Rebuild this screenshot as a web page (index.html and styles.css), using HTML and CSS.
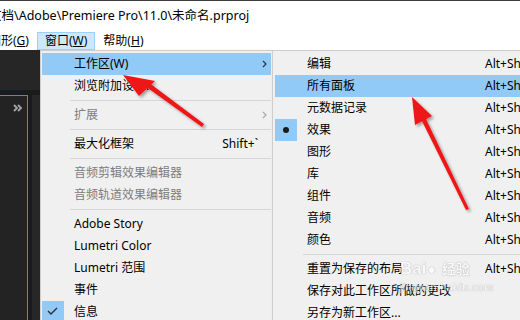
FILE: index.html
```html
<!DOCTYPE html>
<html>
	<head>
		<meta charset="utf-8">
		<title>Premiere Pro - 窗口菜单</title>
		<link rel="stylesheet" href="styles.css">
	</head>
	<body>
		<div class="titlebar">
			<span class="title">文档\Adobe\Premiere Pro\11.0\未命名.prproj</span>
		</div>
		<div class="menubar">
			<span class="mb-item">图形(<u>G</u>)</span>
			<span class="mb-item open">窗口(<u>W</u>)</span>
			<span class="mb-item">帮助(<u>H</u>)</span>
		</div>
		<div class="workspace">
			<div class="dock-top"></div>
			<div class="dock-row">
				<div class="panel active">
					<svg class="more" width="10" height="8" viewBox="0 0 10 8"><polyline points="1,1 4,4 1,7"/><polyline points="5,1 8,4 5,7"/></svg>
				</div>
				<div class="panel"></div>
			</div>
		</div>

		<!-- 窗口 menu -->
		<div class="menu menu-main">
			<div class="item hover"><span class="mark"></span><span class="label">工作区(W)</span><span class="key"></span><svg class="chev" width="5" height="8" viewBox="0 0 5 8"><polyline points="1,1 4,4 1,7"/></svg></div>
			<div class="item"><span class="mark"></span><span class="label">浏览附加设备...</span><span class="key"></span><span></span></div>
			<div class="sep"></div>
			<div class="item disabled"><span class="mark"></span><span class="label">扩展</span><span class="key"></span><svg class="chev" width="5" height="8" viewBox="0 0 5 8"><polyline points="1,1 4,4 1,7"/></svg></div>
			<div class="sep"></div>
			<div class="item"><span class="mark"></span><span class="label">最大化框架</span><span class="key">Shift+`</span><span></span></div>
			<div class="sep"></div>
			<div class="item disabled"><span class="mark"></span><span class="label">音频剪辑效果编辑器</span><span class="key"></span><span></span></div>
			<div class="item disabled"><span class="mark"></span><span class="label">音频轨道效果编辑器</span><span class="key"></span><span></span></div>
			<div class="sep"></div>
			<div class="item"><span class="mark"></span><span class="label">Adobe Story</span><span class="key"></span><span></span></div>
			<div class="item"><span class="mark"></span><span class="label">Lumetri Color</span><span class="key"></span><span></span></div>
			<div class="item"><span class="mark"></span><span class="label">Lumetri 范围</span><span class="key"></span><span></span></div>
			<div class="item"><span class="mark"></span><span class="label">事件</span><span class="key"></span><span></span></div>
			<div class="item"><span class="mark on"><svg width="22" height="22" viewBox="0 0 22 22"><polyline points="6,10 9,13 15,7"/></svg></span><span class="label">信息</span><span class="key"></span><span></span></div>
		</div>

		<!-- 工作区 submenu -->
		<div class="menu menu-sub">
			<div class="item"><span class="mark"></span><span class="label">编辑</span><span class="key">Alt+Shift+1</span></div>
			<div class="item hover"><span class="mark"></span><span class="label">所有面板</span><span class="key">Alt+Shift+2</span></div>
			<div class="item"><span class="mark"></span><span class="label">元数据记录</span><span class="key">Alt+Shift+3</span></div>
			<div class="item"><span class="mark on"><span class="dot"></span></span><span class="label">效果</span><span class="key">Alt+Shift+4</span></div>
			<div class="item"><span class="mark"></span><span class="label">图形</span><span class="key">Alt+Shift+5</span></div>
			<div class="item"><span class="mark"></span><span class="label">库</span><span class="key">Alt+Shift+6</span></div>
			<div class="item"><span class="mark"></span><span class="label">组件</span><span class="key">Alt+Shift+7</span></div>
			<div class="item"><span class="mark"></span><span class="label">音频</span><span class="key">Alt+Shift+8</span></div>
			<div class="item"><span class="mark"></span><span class="label">颜色</span><span class="key">Alt+Shift+9</span></div>
			<div class="sep"></div>
			<div class="item"><span class="mark"></span><span class="label">重置为保存的布局</span><span class="key">Alt+Shift+0</span></div>
			<div class="item"><span class="mark"></span><span class="label">保存对此工作区所做的更改</span><span class="key"></span></div>
			<div class="item"><span class="mark"></span><span class="label">另存为新工作区...</span><span class="key"></span></div>
		</div>

		<div class="watermark">
			<div class="wm-logo">Bai<span class="paw">●</span><span class="wm-jy">经验</span></div>
			<div class="wm-url">jingyan.baidu.com</div>
		</div>

		<svg class="arrows" width="520" height="320" viewBox="0 0 520 320">
			<defs>
				<filter id="shadow" x="-20%" y="-20%" width="140%" height="140%">
					<feDropShadow dx="2" dy="2" stdDeviation="1.6" flood-color="#000" flood-opacity="0.35"/>
				</filter>
			</defs>
			<g filter="url(#shadow)" fill="#ee1414">
				<polygon points="123,75 155,81 139,96"/>
				<polygon points="145,86 148,82 204,124 202,127"/>
				<polygon points="412,97 432,116 415,125"/>
				<polygon points="421,119 425,117 469,209 466,210"/>
			</g>
		</svg>
	</body>
</html>
```

FILE: styles.css
```css
body {
	margin: 0;
	width: 520px;
	height: 320px;
	overflow: hidden;
	position: relative;
	background: #fff;
	color: #000;
	font-family: "Noto Sans", "Noto Sans CJK SC", sans-serif;
	font-size: 12px;
}
.titlebar {
	height: 30px;
	border-top: 1px solid #3c3c3c;
	white-space: nowrap;
}
.title {
	display: block;
	margin-left: -11px;
	font-size: 12.5px;
	line-height: 30px;
}
.menubar {
	display: flex;
	height: 19px;
	margin-left: -19px;
	padding-top: 1px;
	box-sizing: border-box;
	white-space: nowrap;
}
.mb-item {
	padding: 0 7px;
	border: 1px solid transparent;
	line-height: 16px;
	height: 16px;
}
.mb-item.open {
	background: #cce8ff;
	border-color: #99d1ff;
}
.workspace {
	height: 270px;
	display: grid;
	grid-template-rows: 40px 1fr;
	row-gap: 5px;
	background: #1b1b1b;
}
.dock-top {
	background: #262626;
}
.dock-row {
	display: grid;
	grid-template-columns: 28px 1fr;
	column-gap: 4px;
}
.panel {
	background: #272727;
}
.panel.active {
	background: #232323;
	border-top: 1px solid #3d8de2;
	border-right: 1px solid #3d8de2;
	display: flex;
	justify-content: flex-end;
	align-items: flex-start;
	padding: 8px 4px 0 0;
}
.more polyline {
	fill: none;
	stroke: #a5a5a5;
	stroke-width: 1.8;
}

/* menus */
.menu {
	position: absolute;
	top: 50px;
	background: #f0f0f0;
	border: 1px solid #cdcdcd;
	padding: 2px 1px;
	box-shadow: 2px 2px 3px rgba(0, 0, 0, 0.18);
}
.menu-main {
	left: 40px;
	width: 229px;
}
.menu-sub {
	left: 272px;
	width: 300px;
	padding: 2px;
}
.item {
	display: grid;
	grid-template-columns: 22px 1fr auto 13px;
	align-items: center;
	height: 22px;
	line-height: 22px;
	white-space: nowrap;
}
.menu-sub .item {
	grid-template-columns: 22px 188px 1fr;
}
.menu-sub .key {
	text-align: left;
}
.item.hover {
	background: #91c9f7;
}
.item.disabled {
	color: #7d7d7d;
}
.label {
	padding-left: 10px;
}
.key {
	text-align: right;
}
.mark {
	height: 22px;
	display: flex;
	align-items: center;
	justify-content: center;
}
.mark.on {
	background: #91c9f7;
}
.mark polyline {
	fill: none;
	stroke: #2f2f2f;
	stroke-width: 1.4;
}
.dot {
	width: 6px;
	height: 6px;
	border-radius: 50%;
	background: #1a1a1a;
}
.chev {
	justify-self: start;
	margin-left: 4px;
}
.chev polyline {
	fill: none;
	stroke: #333;
	stroke-width: 1.2;
}
.disabled .chev polyline {
	stroke: #a8a8a8;
}
.sep {
	height: 1px;
	margin: 3px 0 3px 28px;
	background: #d5d5d5;
}

/* watermark and annotation overlay */
.watermark {
	position: absolute;
	left: 400px;
	top: 258px;
	color: #fff;
	opacity: 0.6;
	text-shadow: 0 0 1px #8a8a8a, 0 0 1px #8a8a8a;
	font-family: "Liberation Sans", sans-serif;
}
.wm-logo {
	font-size: 17px;
	font-weight: bold;
	line-height: 20px;
}
.paw {
	font-size: 14px;
	margin: 0 6px 0 1px;
}
.wm-jy {
	font-family: "Noto Sans CJK SC", sans-serif;
	font-size: 14px;
	font-weight: bold;
}
.wm-url {
	font-size: 11px;
	line-height: 16px;
	letter-spacing: 0.3px;
}
.arrows {
	position: absolute;
	left: 0;
	top: 0;
}
```
